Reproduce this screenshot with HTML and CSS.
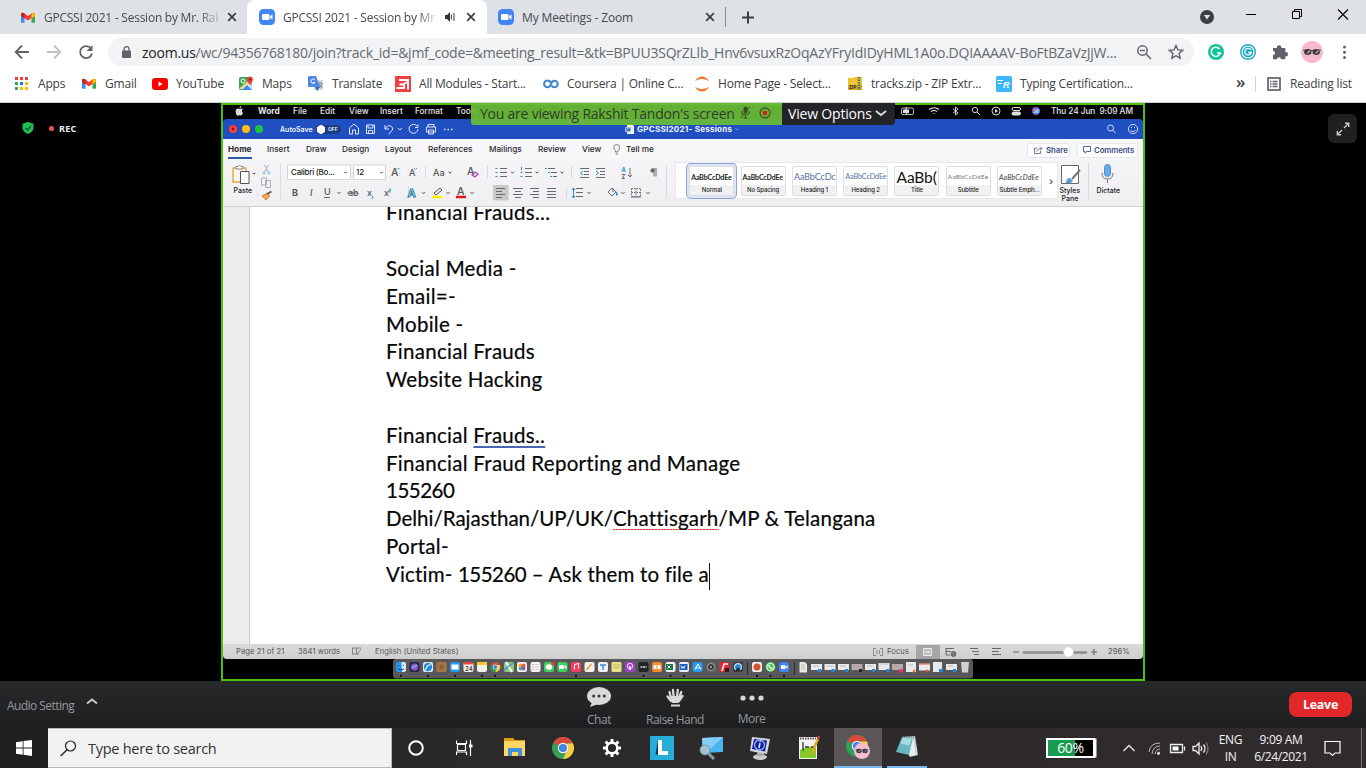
FILE: index.html
```html
<!DOCTYPE html>
<html lang="en">
<head>
<meta charset="utf-8">
<title>GPCSSI 2021 - Session</title>
<link rel="stylesheet" href="styles.css">
</head>
<body>
<svg class="defs" width="0" height="0">
  <defs>
    <symbol id="gmail" viewBox="0 0 16 12"><path d="M0 2v9q0 1 1 1h3V5z" fill="#4285f4"/><path d="M16 2v9q0 1-1 1h-3V5z" fill="#34a853"/><path d="M12 1l4 .5V4l-4 3z" fill="#fbbc04"/><path d="M0 2Q1-.5 3.500 1L8 4.300 12.500 1Q15-.5 16 2L15 4.500 8 9.500 1 4.500z" fill="#ea4335"/><path d="M0 2v2l4 3V1.300Q1-.5 0 2z" fill="#c5221f"/><path d="M16 2v2l-4 3V1.300Q15-.5 16 2z" fill="#fbbc04"/></symbol>
    <symbol id="zoomlogo" viewBox="0 0 16 16"><rect width="16" height="16" rx="4.500" fill="#4285f5"/><rect x="3" y="5" width="7.500" height="6" rx="1.300" fill="#fff"/><path d="M11 7.200L13.500 5.200v5.600L11 8.800z" fill="#fff"/></symbol>
    <symbol id="x" viewBox="0 0 10 10"><path d="M1.200 1.200l7.600 7.600M8.800 1.200L1.200 8.800" stroke="#3c4043" stroke-width="1.700"/></symbol>
    <symbol id="chrome" viewBox="0 0 24 24"><circle cx="12" cy="12" r="11" fill="#34a05a"/><path d="M12 12L2.500 6.500A11 11 0 0 1 21.500 6.500L22 7.500H12z" fill="#d9483b"/><path d="M12 12L16.200 7.500H22A11 11 0 0 1 12 23L16 14z" fill="#fbcb43"/><circle cx="12" cy="12" r="5.200" fill="#fff"/><circle cx="12" cy="12" r="4.100" fill="#4383e8"/></symbol>
    <symbol id="glasses" viewBox="0 0 22 22"><circle cx="11" cy="11" r="11" fill="#f8bbd0"/><path d="M2 9q9 1 18 0" stroke="#49474b" fill="none"/><ellipse cx="6.800" cy="11" rx="3.700" ry="3" fill="#3b393c"/><ellipse cx="15.200" cy="11" rx="3.700" ry="3" fill="#3b393c"/><path d="M6 12.500l3-3M14.500 12.500l3-3" stroke="#b8b3b4" stroke-width="1.300"/></symbol>
    <symbol id="v" viewBox="0 0 4 3"><path d="M.5.700L2 2.200 3.500.700" stroke="#444" stroke-width="1" fill="none"/></symbol>
  </defs>
</svg>

<header class="tabs">
  <div class="tab tab-a">
    <svg width="14" height="11"><use href="#gmail"/></svg><span class="tab-text">GPCSSI 2021 - Session by Mr. Rak</span><svg class="close" width="10" height="10"><use href="#x"/></svg>
  </div>
  <div class="tab tab-b">
    <svg width="16" height="16"><use href="#zoomlogo"/></svg><span class="tab-text">GPCSSI 2021 - Session by Mr.</span>
    <svg class="speaker" width="11" height="10" viewBox="0 0 11 10"><path d="M0 3h2l3-3v10L2 7H0z" fill="#333"/><path d="M6.500 2.500v5M9 1v8" stroke="#555" stroke-width="1.200"/></svg><svg class="close" width="10" height="10"><use href="#x"/></svg>
  </div>
  <div class="tab tab-c">
    <svg width="16" height="16"><use href="#zoomlogo"/></svg><span class="tab-text plain">My Meetings - Zoom</span><svg class="close" width="10" height="10"><use href="#x"/></svg>
  </div>
  <svg class="new-tab" width="34" height="20" viewBox="0 0 34 20"><path d="M.5 0v20" stroke="#8b8d91"/><path d="M17 10.500h12M23 4.500v12" stroke="#3c4043" stroke-width="2"/></svg>
  <svg class="window-controls" width="166" height="34" viewBox="1200 0 166 34"><circle cx="1207" cy="17" r="7" fill="#3c4043"/><path d="M1203.800 15h6.400l-3.200 4.500z" fill="#dee1e6"/><path d="M1246 14.500h10" stroke="#000"/><path d="M1292.500 11.500h7v7h-7zM1294.500 11.500v-2h7v7h-2" stroke="#000" fill="none"/><path d="M1338 9.500l10 10M1348 9.500l-10 10" stroke="#000" stroke-width="1.100"/></svg>
</header>

<nav class="toolbar">
  <svg width="94" height="20" viewBox="8 42 94 20" fill="none" stroke="#5f6368" stroke-width="1.800"><path d="M29 52H16M22 45.500L15.700 52l6.300 6.500"/><path d="M47 52h13M54 45.500l6.300 6.500-6.300 6.500" stroke="#bdc1c6"/><path d="M91 48.500A6 6 0 1 0 92 53.500"/><path d="M92.500 45v6h-6z" fill="#5f6368" stroke="none"/></svg>
  <div class="omnibox">
    <svg width="10" height="13" viewBox="0 0 10 13"><rect x="0" y="4.500" width="9" height="7.500" rx="1" fill="#5f6368"/><path d="M2 5V3.200a2.500 2.500 0 0 1 5 0V5" fill="none" stroke="#5f6368" stroke-width="1.300"/></svg>
    <span class="url"><b>zoom.us</b>/wc/94356768180/join?track_id=&amp;jmf_code=&amp;meeting_result=&amp;tk=BPUU3SQrZLlb_Hnv6vsuxRzOqAzYFryIdIDyHML1A0o.DQIAAAAV-BoFtBZaVzJjW...</span>
    <svg width="50" height="18" viewBox="1136 43 50 18" fill="none" stroke="#5f6368" stroke-width="1.500"><circle cx="1142.500" cy="50.500" r="4.700"/><path d="M1146 54l5 5M1140 50.500h5"/><path d="M1176 45.500l1.900 4.400 4.800.4-3.600 3.200 1.100 4.700-4.200-2.500-4.200 2.500 1.100-4.700-3.600-3.200 4.800-.4z" stroke-width="1.400"/></svg>
  </div>
  <svg class="extensions" width="150" height="24" viewBox="1204 40 150 24"><circle cx="1216" cy="52" r="8" fill="#15c39a"/><path d="M1219.500 49a4.600 4.600 0 1 0 .8 4h-3.300" fill="none" stroke="#fff" stroke-width="1.600"/><circle cx="1248" cy="52" r="8" fill="#1cabcc"/><circle cx="1248" cy="52" r="6" fill="none" stroke="#fff" stroke-width="1.200"/><path d="M1251 50a3.300 3.300 0 1 0 .3 2.500h-3" fill="none" stroke="#fff" stroke-width="1.300"/><path d="M1273 48h4a2.200 2.200 0 1 1 4.300 0h4v4a2.200 2.200 0 1 1 0 4.300v3h-4.300a2 2 0 0 0-4 0h-4v-4.300a2 2 0 0 0 0-4z" fill="#5f6368"/><use href="#glasses" x="1301" y="41" width="22" height="22"/><g fill="#5f6368"><circle cx="1344.500" cy="47" r="1.500"/><circle cx="1344.500" cy="52.300" r="1.500"/><circle cx="1344.500" cy="57.600" r="1.500"/></g></svg>
</nav>

<nav class="bookmarks">
  <svg width="14" height="14" viewBox="0 0 14 14"><path d="M0 0h3v3H0zM5 0h3v3H5zM10 0h3v3h-3z" fill="#ea4335"/><path d="M0 5h3v3H0z" fill="#34a853"/><path d="M5 5h3v3H5z" fill="#1a73e8"/><path d="M10 5h3v3h-3z" fill="#fbbc04"/><path d="M0 10h3v3H0z" fill="#34a853"/><path d="M5 10h3v3H5zM10 10h3v3h-3z" fill="#fbbc04"/></svg><span>Apps</span>
  <svg width="14" height="11"><use href="#gmail"/></svg><span>Gmail</span>
  <svg width="16" height="12"><rect width="16" height="12" rx="3" fill="#f00"/><path d="M6.500 3.500v5l4-2.500z" fill="#fff"/></svg><span>YouTube</span>
  <svg width="15" height="15" viewBox="0 0 15 15"><rect y="1" width="13" height="13" rx="1.500" fill="#34a853"/><path d="M0 13L12 2l1 11z" fill="#dbe2e6"/><path d="M3 14l5-5 5 5z" fill="#4285f4"/><path d="M1 13L12 3" stroke="#fbd34c" stroke-width="1.500"/><path d="M11 9Q7.500 5 8 3.500a3 3 0 0 1 6 0Q14 6 11 9z" fill="#e5423a"/><circle cx="11" cy="3.500" r="1" fill="#811"/><circle cx="4" cy="5" r="2" stroke="#fff" fill="none"/></svg><span>Maps</span>
  <svg width="16" height="15" viewBox="0 0 16 15"><rect x="6" y="4" width="9" height="10" rx="1" fill="#d4d8dc"/><path d="M1 0h7l4 11H1q-1 0-1-1V1q0-1 1-1z" fill="#4f86e8"/><path d="M7 11h5l-3 4z" fill="#3661bd"/><path d="M7 4A2.200 2.200 0 1 0 7 6.500H5" stroke="#fff" fill="none"/><path d="M10 7h4m-3 5q3-2 3-5m-3 1l3 4" stroke="#66727b" stroke-width=".8" fill="none"/></svg><span>Translate</span>
  <svg width="16" height="16" viewBox="0 0 16 16"><rect width="16" height="16" fill="#f04040"/><path d="M4 4h9v9.500M12 6L8 8.500M1.500 12H9V8.500H4.500" stroke="#fff" stroke-width="1.900" fill="none"/></svg><span>All Modules - Start...</span>
  <svg width="16" height="16" viewBox="0 0 16 16" fill="none" stroke="#3f86cf" stroke-width="2.100"><path d="M8 6.500Q6.500 4.500 4.500 4.500a3.300 3.300 0 0 0 0 6.800Q7 11.300 8 8T11.500 4.700a3.200 3.200 0 0 1 0 6.500Q9.500 11.200 8.500 9.500"/></svg><span>Coursera | Online C...</span>
  <svg width="16" height="16" viewBox="0 0 16 16" fill="#f37726"><path d="M1 5Q4 .5 8 .5T15 5Q8 .8 1 5z"/><path d="M1 11Q4 15.500 8 15.500T15 11Q8 15.200 1 11z"/></svg><span>Home Page - Select...</span>
  <svg width="16" height="16" viewBox="0 0 16 16"><path d="M1 2h5l1-1h8v13H1z" fill="#efc52f"/><path d="M1 9h14v5H1z" fill="#d9a91d"/><path d="M12 1v13" stroke="#556b78" stroke-width="2.500" stroke-dasharray="1.500 1"/><text x="2" y="13" class="zip">ZIP</text></svg><span>tracks.zip - ZIP Extr...</span>
  <svg width="16" height="16" viewBox="0 0 16 16"><rect width="16" height="16" rx="1.500" fill="#3db7fb"/><path d="M1 4.500h6M2 7.500h4" stroke="#fff" stroke-width="1.100"/><text x="7" y="11.500" class="ratatype">R</text></svg><span>Typing Certification...</span>
  <span class="more">»</span>
  <svg width="27" height="16" viewBox="0 0 27 16"><path d="M.5 0v16" stroke="#cfd1d4"/><rect x="13" y="2" width="12" height="12" fill="none" stroke="#5f6368" stroke-width="1.700"/><path d="M15 5.500h1.500M15 8h1.500M15 10.500h1.500M17.500 5.500h5M17.500 8h5M17.500 10.500h5" stroke="#5f6368" stroke-width="1.300"/></svg><span class="reading">Reading list</span>
</nav>

<main class="meeting">
  <aside class="recording">
    <svg width="12" height="12" viewBox="0 0 12 12"><path d="M6 0l5.500 1.800V6Q11 10 6 12 1 10 .5 6V1.800z" fill="#1fbf52"/><path d="M3.500 6l2 2 3.500-4" stroke="#053" stroke-width="1.200" fill="none"/></svg>
    <i></i><span>REC</span>
  </aside>

  <section class="shared">
    <div class="menubar">
      <svg width="9" height="10" viewBox="0 0 9 10"><path d="M4.500 3Q2.500 2 1.300 3.200T1 7.500 3.500 9.500Q4.500 9 5.500 9.500 7 9.500 8.200 7 6.500 6 7 4.500T8 3.200Q6.500 2 4.500 3zM4.400 2.300Q4.400.5 6.200 0 6.300 2 4.400 2.300z" fill="#ddd"/></svg>
      <b>Word</b><span>File</span><span>Edit</span><span>View</span><span>Insert</span><span>Format</span><span>Tools</span>
      <svg width="146" height="12" viewBox="900 105 146 12" fill="none" stroke="#e8e8e8"><rect x="901.500" y="108" width="12" height="6.500" rx="1.500" stroke-width=".8"/><path d="M903 109.500h6v3.500h-6z" fill="#ddd" stroke="none"/><path d="M907 107l-2 4h3l-2 4" stroke-width="1"/><path d="M929 109.500q5-3.500 10 0M931 111.500q3-2 6 0M933.500 113.500h1" stroke-width="1.200"/><path d="M953 108.800l5 4.200-2.500 2v-8l2.500 2-5 4.200" stroke-width=".9"/><circle cx="975" cy="110" r="2.700" stroke-width=".9"/><path d="M977 112l3 3" stroke-width=".9"/><circle cx="996" cy="111" r="4" stroke-width=".9"/><path d="M995 109v4l3-2z" fill="#e8e8e8" stroke="none"/><rect x="1012" y="107.500" width="8.500" height="3" rx="1.500"/><rect x="1012" y="112" width="8.500" height="3" rx="1.500" fill="#ddd"/><g stroke="none"><circle cx="1036" cy="111" r="4.200" fill="#635ad0"/><path d="M1033 108l7 2-5 4z" fill="#ee5aa6"/><path d="M1033 113l5-5 1 5z" fill="#75d6ea"/></g></svg>
      <span class="clock">Thu 24 Jun&nbsp; 9:09 AM</span>
    </div>

    <div class="titlebar">
      <svg width="34" height="10" viewBox="0 0 34 10"><circle cx="4" cy="5" r="4" fill="#ff3b35"/><circle cx="4" cy="5" r="1.200" fill="#701515"/><circle cx="17" cy="5" r="4" fill="#ffbd12"/><circle cx="30" cy="5" r="4" fill="#18c83c"/></svg>
      <span class="autosave">AutoSave</span>
      <span class="switch">OFF</span>
      <svg class="quick" width="110" height="14" viewBox="348 122 110 14" fill="none" stroke="#dce6ff" stroke-width="1"><path d="M350.500 128l4.500-4 4.500 4v6h-3v-4h-3v4h-3zM367.500 125h8v8.500h-8zM369 125v3h5v-3M369.500 133.500v-3h4v3M386 125v4h4M386 129q3-5 6.500-2.500t-3 7.500M399 128l2 2 2-2M418 126a4.500 4.500 0 1 0 1 3M419 124.500v3h-3M429 127v-2.500h6v2.500M427.500 127h9v5h-9zM429.500 130h5v4h-5z"/><path d="M445 129.500h1.500M448.500 129.500h1.500M452 129.500h1.500" stroke-width="1.500"/></svg>
      <svg class="doc-icon" width="10" height="10" viewBox="0 0 10 10"><path d="M2 0h5l2 2v8H2z" fill="#eef3ff"/><rect y="3" width="6" height="5" rx="1" fill="#9bbcf0"/><path d="M1.500 4l1 3 .8-2 .8 2 .8-3" fill="none" stroke="#204fba" stroke-width=".8"/></svg>
      <b class="doc-title">GPCSSI2021- Sessions</b>
      <svg width="6" height="5" viewBox="0 0 6 5"><path d="M1 1l2 2 2-2" stroke="#708ed6" fill="none"/></svg>
      <svg class="title-tools" width="34" height="12" viewBox="1105 123 34 12" fill="none" stroke="#dce6ff" stroke-width=".9"><circle cx="1109.500" cy="128" r="3"/><path d="M1111.700 130.200l3 3"/><circle cx="1132" cy="129" r="4.600"/><path d="M1129.500 130.500q2.500 2.500 5 0M1130.500 127v1M1133.500 127v1"/></svg>
    </div>

    <div class="ribbon-tabs">
      <b class="current">Home</b><span>Insert</span><span>Draw</span><span>Design</span><span>Layout</span><span>References</span><span>Mailings</span><span>Review</span><span>View</span>
      <svg width="8" height="11" viewBox="0 0 8 11"><path d="M2.500 8V6.500Q.5 5 .7 3.500a3 3 0 0 1 6 0Q7 5 5 6.500V8zM2.500 10h2.500" stroke="#666" stroke-width=".8" fill="none"/></svg><span class="tell">Tell me</span>
      <a class="pill share"><svg width="9" height="8" viewBox="0 0 9 8"><path d="M3 2H.5v5.500h6V5M3 5.500Q3 2.500 8 2.500M6 .5l2 2-2 2" stroke="#43598c" stroke-width=".8" fill="none"/></svg>Share</a>
      <a class="pill comments"><svg width="8" height="8" viewBox="0 0 8 8"><path d="M.5.500h7v5h-4L2 7.300V5.500H.5z" stroke="#43598c" stroke-width=".9" fill="none"/></svg>Comments</a>
    </div>

    <div class="ribbon">
      <svg width="62" height="47" viewBox="223 159 62 47"><path d="M233 168h13v14h-13z" fill="#f8f5ef" stroke="#eba545" stroke-width="1.400"/><path d="M236 169v-2.500h2q1.500-3 3 0h2v2.500z" fill="#fff" stroke="#777" stroke-width=".9"/><path d="M240.500 171.500h8.500v12h-8.500z" fill="#fff" stroke="#555"/><use href="#v" x="252" y="172" width="4" height="3"/><text x="233.500" y="193" class="rt">Paste</text><g fill="none" stroke="#a9adb5"><path d="M264.500 165l4 7M268.500 165l-4 7"/><circle cx="264" cy="173" r="1.200" stroke="#8cc3e0"/><circle cx="269" cy="173" r="1.200" stroke="#8cc3e0"/><path d="M261.500 178h5v7h-5zM265.500 180.500h5v7h-5z"/></g><path d="M262 196l5-3 3 3-4 4z" fill="#f0a55a" stroke="#cf7530" stroke-width=".8"/><path d="M267 194l4.500-2.500" stroke="#555" stroke-width="1.500"/><path d="M280.500 163v38" stroke="#dcdce0"/></svg>
      <svg width="206" height="47" viewBox="285 159 206 47"><path d="M287.500 165h63v14.500h-63zM353.500 165h32v14.500h-32z" fill="#fff" stroke="#d4d4d8"/><text x="291" y="175" class="rt big" textLength="44">Calibri (Bo...</text><text x="356" y="175" class="rt big">12</text><g><use href="#v" x="343.500" y="171" width="4" height="3"/><use href="#v" x="379.500" y="171" width="4" height="3"/><use href="#v" x="448" y="171" width="4" height="3"/><use href="#v" x="337" y="191.500" width="4" height="3"/><use href="#v" x="421.500" y="191.500" width="4" height="3"/><use href="#v" x="446" y="191.500" width="4" height="3"/><use href="#v" x="470" y="191.500" width="4" height="3"/></g><g class="letters"><text x="391" y="176" class="lg">A</text><text x="409" y="176">A</text><text x="433" y="176">Aa</text><text x="467" y="175" class="lg">A</text><text x="292" y="196" font-weight="700">B</text><text x="310" y="196" font-style="italic">I</text><text x="324" y="195">U</text><text x="348" y="196">ab</text><text x="367" y="196">x</text><text x="384" y="196">x</text></g><g fill="none" stroke-width=".9"><path d="M397 169.500l1.500-1.500 1.500 1.500M414 168l1.500 1.500 1.500-1.500" stroke="#3c8cc4"/><path d="M472 175l3-3 3 2-3 3z" stroke="#b43bb0" stroke-width="1.300"/><path d="M324 197.500h6M347 193h11" stroke="#555"/><path d="M425.500 166v12M408.500 186v12M487.500 166v12" stroke="#d8d8dc"/><path d="M372 196l1 1-1 2M389 189h1.500v1.500h-1.500v1.500h2" stroke="#3192ca"/></g><text x="407.500" y="197" class="fx">A</text><path d="M434 193l6-5 2 2-6 5z" fill="none" stroke="#555"/><path d="M432 197h10" stroke="#f8f500" stroke-width="2.500"/><text x="457" y="195" class="letters lg">A</text><path d="M456 197h10" stroke="#e51717" stroke-width="2.500"/></svg>
      <svg width="184" height="47" viewBox="491 159 184 47" fill="none" stroke="#6a6a6e"><rect x="493" y="185" width="15.500" height="15.500" rx="1" fill="#c9c9cc" stroke="none"/><path d="M500 168.500h7M500 172.500h7M500 176.500h7M525 168.500h7M525 172.500h7M525 176.500h7M548 168.500h7M551 172.500h6M553 176.500h4M496 188.500h9M496 191.500h6M496 194.500h9M496 197.500h6M513 188.500h10M515 191.500h6M513 194.500h10M515 197.500h6M530 188.500h9M533 191.500h6M530 194.500h9M533 197.500h6M547 188.500h9M547 191.500h9M547 194.500h9M547 197.500h9M580 168.500h9M584 171.500h5M584 174.500h5M580 177.500h9M596 168.500h9M600 171.500h5M600 174.500h5M596 177.500h9M576 188.500h7M576 192.500h7M576 196.500h7"/><path d="M495.500 168.500h2M495.500 172.500h2M495.500 176.500h2M521.500 167v3M520.500 172.500h2M520.500 176.500h2M545 168.500h2M548 172.500h2M550 176.500h2M583 171l-2.500 2 2.500 2M596 171l2.500 2-2.500 2M573.500 188v10M572 190l1.500-2 1.500 2M572 196l1.500 2 1.500-2" stroke="#2e8fcb"/><path d="M571.500 166v12M666.500 166v32M566.500 188v10" stroke="#dadade"/><g stroke="none"><use href="#v" x="510.500" y="171" width="4" height="3"/><use href="#v" x="535" y="171" width="4" height="3"/><use href="#v" x="560" y="171" width="4" height="3"/><use href="#v" x="587" y="191.500" width="4" height="3"/><use href="#v" x="621" y="191.500" width="4" height="3"/><use href="#v" x="646" y="191.500" width="4" height="3"/></g><text x="621.500" y="171.500" class="az">A</text><text x="621.500" y="178.500" class="az z">Z</text><path d="M630 168v9M628 175l2 2 2-2M654 169.500v7M656 169.500v7M657 169h-4"/><circle cx="652.500" cy="170.500" r="1.700" fill="#666"/><path d="M608 192l4-4 4 4-4 4zM613 188v4"/><path d="M616 192q2 3 0 3" stroke="#2e8fcb" stroke-width="1.500"/><path d="M631.500 188.500h9v8h-9zM636 188.500v8M631.500 192.500h9" stroke-dasharray="1.500 1"/><path d="M631 197h10"/></svg>
      <div class="gallery">
        <div class="style picked"><span>AaBbCcDdEe</span><small>Normal</small></div>
        <div class="style"><span>AaBbCcDdEe</span><small>No Spacing</small></div>
        <div class="style h1"><span>AaBbCcDc</span><small>Heading 1</small></div>
        <div class="style h2"><span>AaBbCcDdEe</span><small>Heading 2</small></div>
        <div class="style title"><span>AaBb(</span><small>Title</small></div>
        <div class="style sub"><span>AaBbCcDdEe</span><small>Subtitle</small></div>
        <div class="style emph"><span>AaBbCcDdEe</span><small>Subtle Emph...</small></div>
        <em>›</em>
      </div>
      <svg class="panes" width="85" height="47" viewBox="1058 159 85 47"><path d="M1061.500 165.500h17v18h-17z" fill="#fff" stroke="#555" stroke-width=".9"/><path d="M1080 170l-8 9" stroke="#777" stroke-width="2"/><path d="M1066 183q0-5 4-5l3 3q-2 3-7 2z" fill="#4ca0db"/><text x="1059.500" y="193" class="rt">Styles</text><text x="1061.500" y="200.500" class="rt">Pane</text><path d="M1088.500 162v39" stroke="#dadade"/><rect x="1104.500" y="164.500" width="6" height="12" rx="3" fill="#67aee5" stroke="#3480bd" stroke-width=".8"/><path d="M1102 173q0 6 5.500 6t5.500-6M1107.500 179v4" stroke="#777" fill="none"/><text x="1096.500" y="193" class="rt">Dictate</text></svg>
    </div>

    <div class="document">
      <div class="page">
        <p>Financial Frauds...</p>
        <p>&nbsp;</p>
        <p>Social Media -</p>
        <p>Email=-</p>
        <p>Mobile -</p>
        <p>Financial Frauds</p>
        <p>Website Hacking</p>
        <p>&nbsp;</p>
        <p>Financial <u>Frauds..</u></p>
        <p>Financial Fraud Reporting and Manage</p>
        <p><span class="digits">155260</span></p>
        <p class="long"><span class="states">Delhi/Rajasthan/UP/UK/</span><u class="spell">Chattisgarh</u>/MP &amp; Telangana</p>
        <p>Portal-</p>
        <p class="typing">Victim- <span class="digits">155260</span> – Ask them to file a</p>
      </div>
    </div>

    <div class="status">
      <span>Page 21 of 21</span><span>3841 words</span>
      <svg width="10" height="9" viewBox="0 0 10 9"><path d="M.5 1h4v6h-4zM4.500 1H9M4.500 7H7M9 2L6 6" stroke="#777" fill="none" stroke-width=".9"/></svg>
      <span>English (United States)</span>
      <svg width="14" height="14" viewBox="872 644 14 14"><path d="M876 647.500h-2.500v7h2.500M880 647.500h2.500v7H880M877 649v4M879.500 649v4" stroke="#777" fill="none" stroke-width=".8"/></svg>
      <span>Focus</span>
      <svg width="190" height="14" viewBox="916 644 190 14" fill="none" stroke="#666"><rect x="916" y="644" width="24" height="14" fill="#a5a5a7" stroke="none"/><path d="M923.500 647.500h8v7h-8z" fill="#bbb" stroke="#eee"/><path d="M925 651h5" stroke="#fff"/><path d="M946 647.500h8M946 650.500h5M946 647v7h4M970 647.500h8M972 650.500h7M974 653.500h5M992 647.500h9M992 650.500h7M992 653.500h9"/><circle cx="953.500" cy="653" r="2.500" fill="#777"/><path d="M1013 651h6M1091 651h6M1094 648v6" stroke-width="1.200"/><path d="M1024 651.500h62" stroke="#8b8b8d" stroke-width="2.500" stroke-linecap="round"/><circle cx="1068.500" cy="651" r="5" fill="#fff" stroke="#ccc" stroke-width=".5"/></svg>
      <span>296%</span>
    </div>

    <div class="dock-row">
      <svg class="dock" width="580" height="20" viewBox="393 659 580 20">
        <rect x="393" y="659" width="580" height="19.500" rx="3" fill="#58585b"/>
        <g>
          <rect x="396" y="662" width="10" height="10" rx="2" fill="#2296ed"/><path d="M401.500 662h2.500q2 0 2 2v6q0 2-2 2h-2z" fill="#dce9f2"/><path d="M398 669q3 2 6 0M398.500 665v1M403.500 665v1" stroke="#134" stroke-width=".8" fill="none"/>
          <rect x="409.500" y="662" width="10" height="10" rx="2" fill="#292548"/><circle cx="414.500" cy="667" r="3.500" fill="#9355c9"/><path d="M412 668l5-3" stroke="#7de0ee"/>
          <rect x="423" y="662" width="10" height="10" rx="2" fill="#e8eef3"/><circle cx="428" cy="667" r="4.200" fill="#218be0"/><path d="M425.500 669.500l2-3.500 3-1.500" stroke="#fff" stroke-width="1.300"/>
          <rect x="436.500" y="662" width="10" height="10" rx="1" fill="#a27645"/><circle cx="441.500" cy="667" r="2.500" fill="#8b6134"/>
          <rect x="450" y="662" width="10" height="10" rx="2" fill="#289aec"/><path d="M451.500 664.500h7v5h-7z" fill="#fff"/>
          <rect x="463.500" y="662" width="10" height="10" rx="2" fill="#f5f3f0"/><path d="M464 662h9v2.500h-9z" fill="#ef4541"/><text x="465" y="670.700" class="cal">24</text>
          <rect x="477" y="662" width="10" height="10" rx="2" fill="#f2efe5"/><path d="M477 662h10v3h-10z" fill="#f9c834"/>
          <use href="#chrome" x="489.800" y="661.500" width="11" height="11"/>
          <rect x="504" y="662" width="10" height="10" rx="2" fill="#8cca76"/><path d="M506 662l6 10" stroke="#fff" stroke-width="2"/><path d="M504 670l9-7" stroke="#4c8dd8" stroke-width="1.500"/>
          <rect x="517" y="662" width="10" height="10" rx="2" fill="#f6f5f0"/><circle cx="520.500" cy="665.500" r="2" fill="#f5ad33"/><circle cx="523.500" cy="665.500" r="2" fill="#df5c3f"/><circle cx="520.500" cy="668.500" r="2" fill="#4cb873"/><circle cx="523.500" cy="668.500" r="2" fill="#8a5ab7"/>
          <rect x="530.500" y="662" width="10" height="10" rx="2" fill="#f7f6f7"/><path d="M532.500 664.500h1M532.500 667h1M532.500 669.500h1" stroke="#d55"/><path d="M535 664.500h4M535 667h4M535 669.500h4" stroke="#bbb" stroke-width=".6"/>
          <rect x="544" y="662" width="10" height="10" rx="2" fill="#3dce5b"/><ellipse cx="549" cy="667" rx="3.300" ry="2.700" fill="#fff"/><circle cx="553" cy="663.500" r="2" fill="#e33b3b"/>
          <rect x="557.500" y="662" width="10" height="10" rx="2" fill="#3dce5b"/><rect x="559" y="665" width="5" height="4" rx="1" fill="#fff"/><path d="M564 667l2.500-2v4z" fill="#fff"/>
          <rect x="571" y="662" width="10" height="10" rx="2" fill="#f83e58"/><path d="M574.500 669.500v-5l4-1v5" stroke="#fff" fill="none"/>
          <rect x="584.500" y="662" width="10" height="10" rx="2" fill="#f4f1ed"/><path d="M586.500 670l5-6" stroke="#e0a03b" stroke-width="1.500"/>
          <rect x="598" y="662" width="10" height="10" rx="2" fill="#eef2f6"/><path d="M600 665h6M603 665v5" stroke="#3d8fda" stroke-width="1.500"/>
          <rect x="611.500" y="662" width="10" height="10" rx="1" fill="#ecdf88"/><path d="M613 665h7M613 667.500h6" stroke="#b3a65a" stroke-width=".7"/>
          <rect x="625" y="662" width="10" height="10" rx="2" fill="#a040cb"/><circle cx="630" cy="666" r="2.700" fill="none" stroke="#fff" stroke-width=".8"/><path d="M630 666v4" stroke="#fff" stroke-width="1.500"/>
          <rect x="638.500" y="662" width="10" height="10" rx="2" fill="#222"/><path d="M640.500 667h6" stroke="#ddd" stroke-width="1.500" stroke-dasharray="2 .5"/>
          <rect x="652" y="662" width="10" height="10" rx="2" fill="#f68b2c"/><path d="M653.500 665h3v4h-3zM657.500 665h3v4h-3z" fill="#fff"/>
          <rect x="665.500" y="662" width="10" height="10" rx="2" fill="#eef3ef"/><rect x="666" y="664" width="7" height="6" fill="#187546"/><path d="M667.500 665.500l3 3M670.500 665.500l-3 3" stroke="#fff"/>
          <rect x="679" y="662" width="10" height="10" rx="2" fill="#e8f1fb"/><rect x="679.500" y="664" width="8" height="6" fill="#1d5cbd"/><path d="M681 665.500l1 3 1-2 1 2 1-3" stroke="#fff" stroke-width=".8" fill="none"/>
          <rect x="692.500" y="662" width="10" height="10" rx="2" fill="#2899ee"/><path d="M695 669.500l3-5.500 3 5.500M695 668h5" stroke="#fff" fill="none"/>
          <rect x="706" y="662" width="10" height="10" rx="2" fill="#606164"/><circle cx="711" cy="667" r="3.500" fill="#2f3032" stroke="#bbb" stroke-width=".8"/><circle cx="711" cy="667" r="1.200" fill="#999"/>
          <rect x="719.500" y="662" width="10" height="10" rx="1" fill="#e72430"/><path d="M722 671l2-7h4" stroke="#fff" stroke-width="1.500" fill="none"/><rect x="725" y="668" width="4" height="4" fill="#222"/>
          <rect x="733" y="662" width="10" height="10" rx="2" fill="#343a44"/><circle cx="738" cy="667" r="4" fill="#bfe4f5"/><circle cx="738" cy="667" r="2.800" fill="#2887c8"/><path d="M735 671l2-3h2l2 3z" fill="#24272c"/>
          <path d="M747.500 662v13M794.500 662v13" stroke="#2c2c2f"/>
          <rect x="752" y="662" width="10" height="10" rx="2" fill="#f4eeeb"/><circle cx="757" cy="667" r="3.500" fill="#d65233"/>
          <circle cx="770.500" cy="667" r="5" fill="#40c953"/><circle cx="770.500" cy="667" r="3.700" fill="none" stroke="#fff"/><path d="M769 665q0 3 3.500 3.500" stroke="#fff" stroke-width="1.400" fill="none"/>
          <use href="#zoomlogo" x="779" y="662" width="10" height="10"/>
          <path d="M799.500 662h5l2.500 2v8.500h-7.500z" fill="#e8e8e6"/><path d="M801 665h4M801 667h4M801 669h4" stroke="#aaa" stroke-width=".6"/>
        </g>
        <g fill="#e8e9ec"><path d="M811 664h11v6h-11zM824.500 664h11v6h-11zM838 664h11v6h-11zM865 664h11v6h-11zM878.500 663h11v7h-11zM906 662h10v10h-10zM919 663.500h11v7h-11zM933 662h9v10h-9zM946 664h11v6h-11z"/><path d="M851.500 664h11v6h-11zM892 664h11v6h-11z" fill="#b8a9aa"/><path d="M961 662h8l-1 10.500h-6z" fill="#d0d1d3"/></g>
        <path d="M813 666h6M827 666h6M840 666h6M867 666h6M880 664h8M908 665h5M948 666h5" stroke="#9fa5ad" stroke-width=".6"/><path d="M919 664h11" stroke="#e65a38"/><g fill="#2187df"><path d="M818 669h3v3h-3zM831.500 669h3v3h-3zM845 669h3v3h-3zM872 669h3v3h-3zM886 669h3v3h-3zM939 669h4v3h-4zM953 669h3v3h-3z"/><path d="M859 669h3v3h-3z" fill="#222"/><circle cx="901" cy="671" r="2" fill="#ec2e68"/><circle cx="914" cy="671" r="1.500" fill="#e28b35"/><circle cx="927" cy="671" r="1.500" fill="#df513b"/></g>
        <path d="M401 674.700v2M428 674.700v2M455 674.700v2M482 674.700v2M495 674.700v2M576 674.700v2M643.500 674.700v2M670.500 674.700v2M684 674.700v2M757 674.700v2M770.500 674.700v2M784 674.700v2" stroke="#111" stroke-width="2"/>
      </svg>
    </div>
  </section>

  <div class="banner">
    <div class="banner-main"><span>You are viewing Rakshit Tandon's screen</span><svg width="34" height="14" viewBox="738 107 34 14"><rect x="743.500" y="107.500" width="4" height="7" rx="2" fill="#38501f"/><path d="M741.500 112q0 4 4 4t4-4M745.500 116v3M743.500 119h4M740.500 119l9-11" stroke="#38501f" fill="none"/><circle cx="765" cy="114" r="5" fill="none" stroke="#46572a" stroke-width="1.300"/><circle cx="765" cy="114" r="2.300" fill="#e71810"/></svg></div>
    <div class="banner-options"><span>View Options</span><svg width="12" height="7" viewBox="0 0 12 7"><path d="M1 1l5 4 5-4" stroke="#ddd" stroke-width="1.800" fill="none"/></svg></div>
  </div>
  <button class="fullscreen"><svg width="14" height="14" viewBox="0 0 14 14" fill="none" stroke="#c9c9c9" stroke-width="1.400"><path d="M8 6l4.500-4.500M9 1.300h3.700V5M6 8l-4.500 4.500M1.300 9v3.700H5"/></svg></button>
</main>

<section class="controls">
  <div class="audio"><span>Audio Setting</span><svg width="12" height="8" viewBox="0 0 12 8"><path d="M1 6.500l5-4 5 4" stroke="#ccc" stroke-width="2" fill="none"/></svg></div>
  <div class="actions">
    <div><svg width="24" height="21" viewBox="0 0 24 21"><ellipse cx="12" cy="9" rx="12" ry="9" fill="#d9d9d9"/><path d="M5 15l-2 5 8-3z" fill="#d9d9d9"/><g fill="#333"><circle cx="6.700" cy="9" r="1.500"/><circle cx="12" cy="9" r="1.500"/><circle cx="17.300" cy="9" r="1.500"/></g></svg><span>Chat</span></div>
    <div><svg width="20" height="21" viewBox="0 0 20 21"><path d="M6 11L4.500 5M8.700 10L8 3M12 10l.8-7M14 11l2.300-6M6 14L2.500 9.500M14 14l3.500-5" stroke="#d9d9d9" stroke-width="2.300" stroke-linecap="round"/><path d="M5 9h10.500l-2 7H7z" fill="#d9d9d9"/><path d="M6 17.500h9v2H6z" fill="#d9d9d9"/></svg><span>Raise Hand</span></div>
    <div><svg width="24" height="20" viewBox="0 0 24 20" fill="#d9d9d9"><circle cx="3" cy="11" r="2.600"/><circle cx="12" cy="11" r="2.600"/><circle cx="21" cy="11" r="2.600"/></svg><span>More</span></div>
  </div>
  <button class="leave">Leave</button>
</section>

<footer class="taskbar">
  <div class="start"><svg width="16" height="16" viewBox="0 0 16 16" fill="#fff"><path d="M0 2.200L6.700 1.200V7.500H0zM7.500 1.100L16 0v7.500H7.500zM0 8.400h6.700v6.300L0 13.800zM7.500 8.400H16V16l-8.500-1.200z"/></svg></div>
  <div class="search"><svg width="17" height="17" viewBox="0 0 17 17"><circle cx="10.500" cy="6" r="5" fill="none" stroke="#222" stroke-width="1.200"/><path d="M7 9.700L.7 16" stroke="#222" stroke-width="1.400"/></svg><span>Type here to search</span></div>
  <div class="apps">
    <div><svg width="16" height="16"><circle cx="8" cy="8" r="6.800" fill="none" stroke="#fff" stroke-width="2"/></svg></div>
    <div><svg width="17" height="16" viewBox="0 0 17 16" fill="none" stroke="#fff" stroke-width="1.200"><path d="M.5.500v3h10v-3M1.500 4.500h8v6h-8zM.5 15v-3h10v3M14.500 0v16"/><path d="M13 4.500h3.500v3H13z" fill="#fff" stroke="none"/></svg></div>
    <div class="explorer"><svg width="22" height="20" viewBox="0 0 22 20"><path d="M0 0h9l2 2h10v4H0z" fill="#dc9c15"/><path d="M0 3h21v15H0z" fill="#ffd564"/><path d="M4 10h14v8h-4v-4H8v4H4z" fill="#3e92d7"/></svg></div>
    <div><svg width="24" height="24"><use href="#chrome"/></svg></div>
    <div><svg width="20" height="20" viewBox="0 0 20 20"><path d="M10 1v3M10 16v3M1 10h3M16 10h3M3.600 3.600l2.200 2.200M14.200 14.200l2.200 2.200M3.600 16.400l2.200-2.200M14.200 5.800l2.200-2.200" stroke="#fff" stroke-width="3"/><circle cx="10" cy="10" r="5.300" stroke="#fff" stroke-width="2.500" fill="#2c292a"/></svg></div>
    <div><svg width="24" height="24" viewBox="0 0 24 24"><path d="M0 0h24v24H0z" fill="#25acd8"/><path d="M5.500 18.500L8 4h3v15z" fill="#12314f"/><path d="M8 4h4v11h6v4H8z" fill="#fff"/></svg></div>
    <div><svg width="24" height="24" viewBox="0 0 24 24"><path d="M3 2l21-1v15L4 17z" fill="#48b5f2"/><path d="M3 2l21-1L8 16H4z" fill="#83cff8"/><path d="M9 17l6 6" stroke="#8b99a3" stroke-width="3"/><circle cx="6" cy="14" r="5" fill="#a4c2d3" stroke="#7e929e"/></svg></div>
    <div><svg width="22" height="24" viewBox="0 0 22 24"><ellipse cx="11" cy="21" rx="7" ry="3" fill="#ccc"/><path d="M8 16h7v4H8z" fill="#aaa"/><path d="M3 1l18 2-3 15L1 15z" fill="#d4d6dd"/><path d="M5 3l13 1.500-2 11L3 13z" fill="#1220a8"/><circle cx="10.500" cy="9" r="5" fill="none" stroke="#9ab1ee" stroke-width="1.300"/><path d="M11 7l-1 5M11.300 5v1" stroke="#dce5ff" stroke-width="1.600"/></svg></div>
    <div><svg width="24" height="24" viewBox="0 0 24 24"><path d="M2 1h18v22H2z" fill="#f4f4f0"/><path d="M3 14q8-5 16-2v10H3z" fill="#82cb2c"/><path d="M3 2.500h16" stroke="#555" stroke-width="2" stroke-dasharray="1.500 1"/><path d="M6 6v9M8 11h4M14 11h3" stroke="#333" stroke-width="1.300"/><path d="M14 19L21 3" stroke="#e5a51e" stroke-width="2.500"/><path d="M21 3l1-3" stroke="#b9473a" stroke-width="2.500"/></svg></div>
    <div class="active"><svg width="26" height="26" viewBox="0 0 26 26"><use href="#chrome" x="0" y="0" width="24" height="24"/><use href="#glasses" x="9" y="9" width="16" height="16"/></svg></div>
    <div class="opened"><svg width="24" height="24" viewBox="0 0 24 24"><path d="M7 2l13-1 3 19-8 2z" fill="#c6d4d8"/><path d="M7 2l11 1-4 17-13-3z" fill="#69b7c2"/><path d="M8 3l9 .6-3 7-9-2z" fill="#a5dbe0"/><path d="M18 3l3 17-7 1z" fill="#e5eef0"/><path d="M8 1.500l11 .7" stroke="#777" stroke-width="1.500" stroke-dasharray="1 1"/></svg></div>
  </div>
  <div class="tray">
    <div class="battery">60%</div>
    <svg width="88" height="20" viewBox="1121 738 88 20" fill="none" stroke="#eee" stroke-width="1.300"><path d="M1123.500 751l5.500-5.500 5.500 5.500"/><path d="M1149 752q1-9 11-9M1152 754q1-8 8-8M1155 754q1-5 5-5M1157.500 754q0-2 2.500-2" stroke="#bbb" stroke-width="1"/><circle cx="1158.500" cy="753.500" r="1.300" fill="#fff" stroke="none"/><path d="M1170.500 744.500h12v8h-12zM1184.500 746.500v4"/><path d="M1172.500 746.500h6v4h-6z" fill="#fff" stroke="none"/><path d="M1193 746.500h2.500l3.500-3.500v11l-3.500-3.500h-2.500zM1201 746q1.500 2.500 0 5M1203.500 744.500q3 4 0 8"/><path d="M1206 742.500q4 6 0 12" stroke="#777"/></svg>
    <div class="lang">ENG<br>IN</div>
    <div class="datetime">9:09 AM<br>6/24/2021</div>
    <svg class="notify" width="18" height="18" viewBox="0 0 18 18"><path d="M1 1.500h15v11.500h-5l-2.500 2.500L6 13H1z" fill="none" stroke="#fff" stroke-width="1.200"/></svg>
  </div>
</footer>
</body>
</html>
```
FILE: styles.css
```css
* { box-sizing: border-box; }
body { margin: 0; width: 1366px; height: 768px; overflow: hidden; display: flex; flex-direction: column; font-family: "Open Sans", sans-serif; background: #000; }
svg { display: block; flex: none; }
.defs { position: absolute; }
span, b { white-space: nowrap; }
button { border: 0; padding: 0; }

/* browser tabs */
.tabs { height: 34px; flex: none; display: flex; align-items: center; background: #dee1e6; font-size: 12px; color: #45494d; }
.tab { height: 34px; display: flex; align-items: center; }
.tab-a { width: 247px; padding-left: 21px; }
.tab-b { width: 240px; padding-left: 12px; background: #fff; border-radius: 8px 8px 0 0; }
.tab-c { width: 238px; padding-left: 11px; }
.tab-text { width: 175px; margin-left: 9px; overflow: hidden; letter-spacing: -.24px; -webkit-mask-image: linear-gradient(90deg, #000 88%, transparent 102%); mask-image: linear-gradient(90deg, #000 88%, transparent 102%); }
.tab-b .tab-text { width: 153px; margin-left: 8px; }
.tab-text.plain { width: 183px; margin-left: 8px; letter-spacing: -.14px; -webkit-mask-image: none; mask-image: none; }
.tab-a .close { margin-left: 8px; }
.speaker { margin-left: 9px; }
.tab-b .close { margin-left: 10px; }
.window-controls { margin-left: auto; }

/* address bar */
.toolbar { height: 36px; flex: none; display: flex; align-items: center; background: #fff; padding-left: 8px; }
.omnibox { width: 1086px; height: 28px; margin-left: 6px; border-radius: 14px; background: #f1f3f4; display: flex; align-items: center; padding-left: 14px; }
.url { width: 994px; margin-left: 10px; font-size: 14px; letter-spacing: -.245px; color: #666a6e; }
.url b { font-weight: 400; color: #202124; }
.extensions { margin-left: 10px; }

/* bookmarks */
.bookmarks { height: 33px; flex: none; display: grid; align-items: center; padding: 0 0 5px 15px; background: #fff; border-bottom: 1px solid #cfd1d4; font-size: 12px; letter-spacing: -.2px; color: #3c4043;
  grid-template-columns: 23px 44px 23px 47px 24px 63px 23px 46px 24px 63px 24px 124px 24px 127px 24px 129px 24px 125px 24px 216px 19px 35px 70px; }
.more { font-size: 17px; font-weight: 600; line-height: 14px; padding-bottom: 3px; }
.zip { font: 700 5px "Open Sans", sans-serif; fill: #333; }
.ratatype { font: italic 700 9px "Liberation Sans", sans-serif; fill: #fff; }

/* meeting */
.meeting { height: 578px; flex: none; position: relative; display: flex; background: #000; }
.recording { width: 221px; height: 50px; padding-left: 22px; display: flex; align-items: center; color: #eee; font: 700 9px "Open Sans", sans-serif; letter-spacing: .2px; }
.recording i { width: 5px; height: 5px; border-radius: 50%; background: #f0514a; margin: 0 5px 0 15px; }
.shared { width: 924px; height: 578px; border: 2px solid #46c40a; display: flex; flex-direction: column; font-family: Inter, sans-serif; font-size: 8px; }
.menubar { height: 14px; flex: none; display: grid; align-items: center; padding: 0 0 2px 12px; background: #000; color: #e6e6e6; font-size: 8.3px; font-weight: 500; grid-template-columns: 23px 35px 27px 29px 31px 35px 41px 444px 151px 90px; }
.clock { letter-spacing: -.08px; }
.titlebar { height: 20px; flex: none; display: flex; align-items: center; padding-left: 6px; background: #204fc2; border-radius: 4px 4px 0 0; color: #f1f4ff; }
.autosave { width: 36px; margin-left: 17px; font-size: 7px; font-weight: 600; }
.switch { width: 25px; height: 9px; border-radius: 5px; background: #1d3f82; font-size: 5px; font-weight: 600; line-height: 9px; padding-left: 12px; background-image: radial-gradient(circle at 5px 4.5px, #fff 4px, transparent 4.500px); }
.quick { margin-left: 6px; }
.doc-icon { margin-left: 168px; }
.doc-title { width: 97px; margin-left: 2px; font-size: 8px; font-weight: 700; letter-spacing: .27px; }
.title-tools { margin-left: 366px; }
.ribbon-tabs { height: 20px; flex: none; display: grid; align-items: center; padding-left: 5px; background: #f7f6f8; color: #29292b; font-size: 8.2px; font-weight: 500; grid-template-columns: 39px 39px 36px 43px 43px 61px 49px 44px 31px 13px 401px 50px 61px; }
.current { justify-self: start; line-height: 15px; border-bottom: 2px solid #3058aa; margin-top: 2px; letter-spacing: 0; }
.pill { display: flex; align-items: center; gap: 3px; height: 15px; padding-left: 6px; background: #fff; border: 1px solid #e6e6ea; border-radius: 3px; color: #354c84; font-weight: 600; font-size: 7.800px; margin-top: 2px; }
.share { width: 43px; }
.comments { padding-left: 5px; letter-spacing: -.1px; }
.ribbon { height: 48px; flex: none; display: flex; background: linear-gradient(#f5f4f6, #efeef1); border-bottom: 1px solid #cfcfd2; }
.rt { font: 500 7px Inter, sans-serif; fill: #222; stroke: none; }
.rt.big { font-size: 8px; }
.letters { font: 500 9px Inter, sans-serif; fill: #555; }
.lg { font-size: 10.500px; }
.fx { font: 700 11px Inter, sans-serif; fill: #e8f6fc; stroke: #277faa; stroke-width: .9px; }
.az { font: 700 5.700px/5px Inter, sans-serif; fill: #2e8fcb; stroke: none; }
.az.z { fill: #555; }
.gallery { width: 383px; height: 37px; margin-top: 3px; padding: 0 0 0 10px; background: #fff; border: 1px solid #e8e8eb; display: flex; }
.style { width: 45px; height: 30px; margin: 3px 3px 0 3.300px; border: 1px solid #dedee2; border-radius: 2px; background: #fff; overflow: hidden; display: flex; flex-direction: column; color: #222; flex: none; }
.style.picked { box-shadow: 0 0 0 2px #dce5f3, 0 0 0 3px #8ca7d3; overflow: hidden; }
.style span { height: 19px; font: 700 7px/20px Lato, sans-serif; letter-spacing: -.14px; overflow: hidden; padding-left: 1px; }
.style small { height: 10px; font-size: 6px; line-height: 9px; text-align: center; background: #f1f1f3; white-space: nowrap; font-weight: 500; letter-spacing: -.1px; }
.style.h1 span { font-size: 9px; color: #5572a6; font-weight: 400; letter-spacing: -.1px; }
.style.h2 span { font-size: 7.300px; color: #5572a6; font-weight: 400; letter-spacing: -.15px; }
.style.title span { font-size: 15.500px; font-weight: 400; color: #111; letter-spacing: -.1px; }
.style.sub span { font-size: 6.500px; font-weight: 400; color: #777; letter-spacing: .25px; }
.style.emph span { font-style: italic; color: #444; font-weight: 400; letter-spacing: .1px; }
.gallery em { font: 600 10px Inter, sans-serif; margin: 12px 0 0 4px; color: #555; }
.document { height: 437px; flex: none; padding-left: 26px; background: #ececed; overflow: hidden; }
.page { height: 437px; border-left: 1px solid #c9c9cb; background: #fff; padding-left: 136px; font-family: Lato, sans-serif; font-size: 20.500px; color: #050505; overflow: hidden; -webkit-text-stroke: .2px #050505; }
.page p { margin: 0; height: 27.830px; line-height: 27.830px; white-space: nowrap; letter-spacing: .28px; }
.page p:first-child { margin-top: -7.800px; }
.page u { text-decoration: underline #4768b0 1.500px; text-underline-offset: 3px; text-decoration-skip-ink: none; }
.page .spell { text-decoration: none; background: repeating-linear-gradient(90deg, #e33 0 2px, #f9b5b5 2px 3px) 0 100% / 100% 1.500px no-repeat; }
.page .digits { letter-spacing: -.5px; }
.page .states { letter-spacing: 0; }
.page .long { letter-spacing: .2px; }
.page .typing { letter-spacing: .16px; }
.typing::after { content: ""; display: inline-block; width: 1px; height: 27px; background: #111; vertical-align: middle; }
.status { height: 15px; flex: none; display: grid; align-items: center; padding-left: 13px; background: linear-gradient(#dadada, #cfcfcf); border-radius: 0 0 4px 4px; color: #555; font-size: 7.600px; letter-spacing: .08px; grid-template-columns: 62px 54px 23px 497px 15px 29px 192px 30px; }
.dock-row { height: 20px; padding-left: 170px; }
.cal { font: 600 6px Inter, sans-serif; fill: #444; }
.banner { position: absolute; left: 471px; top: 0; height: 22px; display: flex; font-size: 14px; }
.banner-main { width: 311px; background: rgba(105,187,57,.94); color: #303c28; display: flex; align-items: center; padding: 0 0 2px 9px; border-radius: 0 0 0 3px; }
.banner-main span { width: 258px; letter-spacing: -.23px; }
.banner-options { width: 113px; padding: 0 0 2px 6px; display: flex; align-items: center; background: #232427; border-radius: 0 0 4px 0; color: #fff; }
.banner-options span { width: 87px; letter-spacing: -.18px; font-weight: 500; }
.fullscreen { position: absolute; left: 1328px; top: 11px; width: 29px; height: 29px; border-radius: 6px; background: #1f2022; display: grid; place-items: center; }

/* meeting controls */
.controls { height: 47px; flex: none; display: flex; background: linear-gradient(#27292b, #1c1e20); color: #96989b; font-size: 12px; }
.audio { width: 580px; padding: 16px 0 0 7px; line-height: 17px; display: flex; align-items: flex-start; }
.audio span { width: 68px; letter-spacing: -.56px; }
.audio svg { margin-left: 11px; }
.actions { display: flex; }
.actions div { display: flex; flex-direction: column; align-items: center; padding-top: 6px; }
.actions div:nth-child(1) { width: 38px; }
.actions div:nth-child(2) { width: 114px; }
.actions div:nth-child(3) { width: 39px; }
.actions span { line-height: 16px; margin-top: 4px; letter-spacing: -.5px; }
.leave { width: 63px; height: 25px; margin: 11px 14px 0 auto; border-radius: 8px; background: #e02828; color: #fff; font: 700 12.500px "Open Sans", sans-serif; letter-spacing: -.25px; }

/* taskbar */
.taskbar { height: 40px; flex: none; display: flex; background: linear-gradient(90deg, #1f1f20, #2b292a 35%, #302b2d); color: #f3f3f3; }
.start { width: 48px; display: grid; place-items: center; }
.search { width: 344px; height: 40px; padding-left: 12px; display: flex; align-items: center; background: #f2f2f2; border: 1px solid #b8b8b8; border-left: 0; color: #333; }
.search span { margin-left: 11px; font-size: 14.500px; letter-spacing: -.26px; }
.apps { display: flex; width: 538px; }
.apps div { width: 49.250px; height: 40px; display: grid; place-items: center; flex: none; }
.apps div:first-child { width: 48px; }
.apps .explorer svg { margin-left: 2px; }
.apps .active { width: 48px; background: #5a5657; border-bottom: 2px solid #76b9ed; }
.apps .opened { width: 40px; margin-left: 5px; border-bottom: 2px solid #76b9ed; }
.tray { width: 432px; display: flex; align-items: center; justify-content: flex-end; font-size: 12px; line-height: 17px; text-align: center; letter-spacing: -.35px; border-right: 1px solid #777; }
.battery { width: 49px; height: 20px; border: 2px solid #fff; background: linear-gradient(90deg, #179b50 60%, #000 60%); font-size: 14px; line-height: 16px; color: #fff; margin-right: 26px; box-shadow: 2px 0 0 -.5px #fff; }
.lang { width: 43px; }
.datetime { width: 58px; }
.notify { margin: 1px 19px 0 14px; }
```
